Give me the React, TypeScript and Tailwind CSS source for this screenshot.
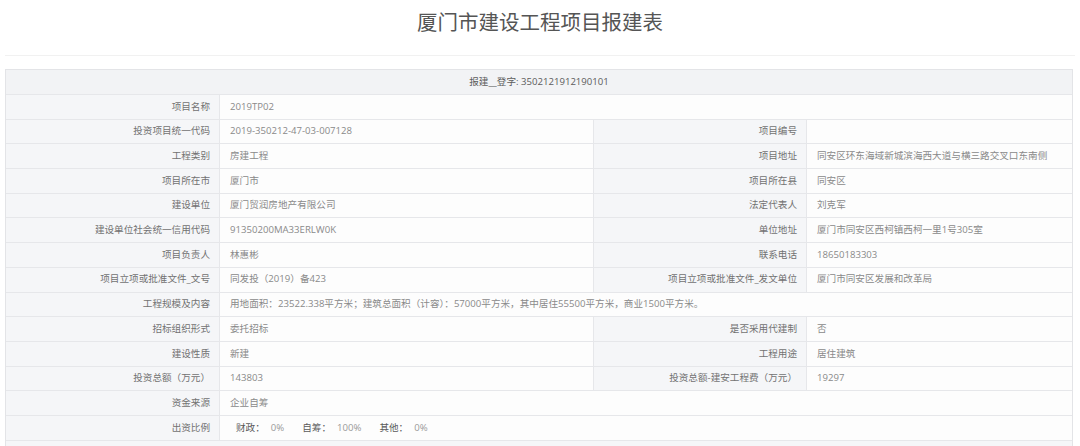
import React from 'react';

type Row =
  | { kind: 'pair'; l1: string; v1: string; l2: string; v2: string }
  | { kind: 'wide'; l1: string; v1: React.ReactNode };

const rows: Row[] = [
  { kind: 'wide', l1: '项目名称', v1: '2019TP02' },
  { kind: 'pair', l1: '投资项目统一代码', v1: '2019-350212-47-03-007128', l2: '项目编号', v2: '' },
  { kind: 'pair', l1: '工程类别', v1: '房建工程', l2: '项目地址', v2: '同安区环东海域新城滨海西大道与横三路交叉口东南侧' },
  { kind: 'pair', l1: '项目所在市', v1: '厦门市', l2: '项目所在县', v2: '同安区' },
  { kind: 'pair', l1: '建设单位', v1: '厦门贸润房地产有限公司', l2: '法定代表人', v2: '刘克军' },
  { kind: 'pair', l1: '建设单位社会统一信用代码', v1: '91350200MA33ERLW0K', l2: '单位地址', v2: '厦门市同安区西柯镇西柯一里1号305室' },
  { kind: 'pair', l1: '项目负责人', v1: '林惠彬', l2: '联系电话', v2: '18650183303' },
  { kind: 'pair', l1: '项目立项或批准文件_文号', v1: '同发投（2019）备423', l2: '项目立项或批准文件_发文单位', v2: '厦门市同安区发展和改革局' },
  {
    kind: 'wide',
    l1: '工程规模及内容',
    v1: '用地面积：23522.338平方米；建筑总面积（计容）：57000平方米，其中居住55500平方米，商业1500平方米。',
  },
  { kind: 'pair', l1: '招标组织形式', v1: '委托招标', l2: '是否采用代建制', v2: '否' },
  { kind: 'pair', l1: '建设性质', v1: '新建', l2: '工程用途', v2: '居住建筑' },
  { kind: 'pair', l1: '投资总额（万元）', v1: '143803', l2: '投资总额-建安工程费（万元）', v2: '19297' },
  { kind: 'wide', l1: '资金来源', v1: '企业自筹' },
  {
    kind: 'wide',
    l1: '出资比例',
    v1: (
      <span className="flex items-center pl-[6px]">
        <span className="text-[#5a5a5a]">财政：</span>
        <span className="ml-[6px] text-[#9a9a9a]">0%</span>
        <span className="ml-[18px] text-[#5a5a5a]">自筹：</span>
        <span className="ml-[6px] text-[#9a9a9a]">100%</span>
        <span className="ml-[18px] text-[#5a5a5a]">其他：</span>
        <span className="ml-[6px] text-[#9a9a9a]">0%</span>
      </span>
    ),
  },
];

const Label = ({ text, w }: { text: string; w: string }) => (
  <div className={`${w} h-full shrink-0 flex items-center justify-end pr-[9px] bg-[#f5f6f8] border-r border-[#e6e7ea] text-[#727272] whitespace-nowrap`}>
    {text}
  </div>
);

const Value = ({ children, w }: { children: React.ReactNode; w?: string }) => (
  <div className={`${w ?? 'flex-1'} h-full flex items-center pl-[10px] bg-[#fdfdfd] text-[#8a8a8a] whitespace-nowrap ${w ? 'border-r border-[#e6e7ea]' : ''}`}>
    {children}
  </div>
);

export default function App() {
  return (
    <div
      className="w-[1080px] h-[446px] overflow-hidden bg-white"
      style={{ fontFamily: '"Open Sans", "Noto Sans CJK SC", sans-serif' }}
    >
      <div className="pt-[8px]">
        <h1 className="text-center text-[20.5px] leading-[28px] font-normal text-[#555]">厦门市建设工程项目报建表</h1>
      </div>
      <div className="mt-[19px] mx-[5px] h-px bg-[#f1f1f1]" />

      {/* 报建表 */}
      <div className="mt-[13px] ml-[5px] w-[1068px] border-l border-r border-t border-[#e3e4e7] text-[9.6px]">
        <div className="h-[25px] flex items-center justify-center bg-[#f2f3f5] border-b border-[#e6e7ea] text-[#5c5c5c]">
          报建__登字: 3502121912190101
        </div>

        {rows.map((r, i) => (
          <div key={i} className="h-[24.7px] flex border-b border-[#e6e7ea]">
            <Label text={r.l1} w="w-[214px]" />
            {r.kind === 'pair' ? (
              <>
                <Value w="w-[374px]">{r.v1}</Value>
                <Label text={r.l2} w="w-[213px]" />
                <Value>{r.v2}</Value>
              </>
            ) : (
              <Value>{r.v1}</Value>
            )}
          </div>
        ))}

        <div className="h-[24.7px] bg-[#f5f6f8]" />
      </div>
    </div>
  );
}
